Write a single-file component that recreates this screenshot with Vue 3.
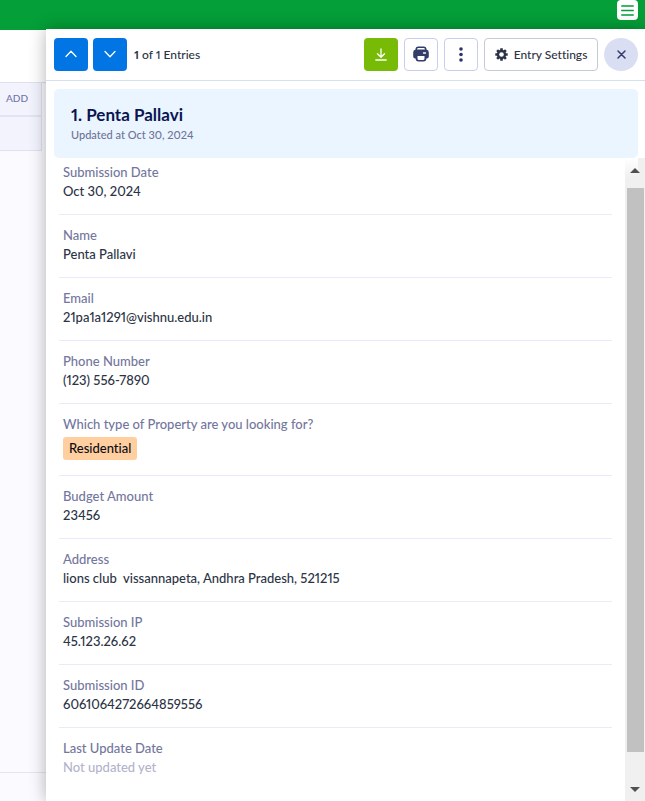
<script setup>
import { ref } from 'vue'

const entry = {
  title: '1. Penta Pallavi',
  updated: 'Updated at Oct 30, 2024',
}

const fields = ref([
  { label: 'Submission Date', value: 'Oct 30, 2024' },
  { label: 'Name', value: 'Penta Pallavi' },
  { label: 'Email', value: '21pa1a1291@vishnu.edu.in' },
  { label: 'Phone Number', value: '(123) 556-7890' },
  { label: 'Which type of Property are you looking for?', value: 'Residential', tag: true },
  { label: 'Budget Amount', value: '23456' },
  { label: 'Address', value: 'lions club\u00a0 vissannapeta, Andhra Pradesh, 521215' },
  { label: 'Submission IP', value: '45.123.26.62' },
  { label: 'Submission ID', value: '6061064272664859556' },
  { label: 'Last Update Date', value: 'Not updated yet', muted: true },
])
</script>

<template>
  <div class="app">
    <header class="topbar">
      <button class="menu" type="button" aria-label="Menu">
        <svg width="13" height="11" viewBox="0 0 13 11" fill="none" stroke="#049c38" stroke-width="1.3" stroke-linecap="round">
          <path d="M.7 1h11.6M.7 5.5h11.6M.7 10h11.6" />
        </svg>
      </button>
    </header>

    <main class="sheet">
      <div class="sheet-tools"></div>
      <div class="sheet-grid">
        <button class="add" type="button">ADD</button>
        <div class="cell"></div>
      </div>
      <div class="sheet-footer"></div>
    </main>

    <aside class="drawer">
      <div class="toolbar">
        <button class="btn nav" type="button" aria-label="Previous entry">
          <svg width="12" height="8" viewBox="0 0 12 8" fill="none" stroke="#fff" stroke-width="1.3" stroke-linecap="round" stroke-linejoin="round"><path d="M1 6.5 6 1.3l5 5.2" /></svg>
        </button>
        <button class="btn nav" type="button" aria-label="Next entry">
          <svg width="12" height="8" viewBox="0 0 12 8" fill="none" stroke="#fff" stroke-width="1.3" stroke-linecap="round" stroke-linejoin="round"><path d="m1 1.5 5 5.2 5-5.2" /></svg>
        </button>
        <p class="count"><b>1</b> of 1 Entries</p>

        <div class="actions">
          <button class="btn download" type="button" aria-label="Download">
            <svg width="12" height="13" viewBox="0 0 12 13" fill="none" stroke="#fff" stroke-width="1.3" stroke-linecap="round" stroke-linejoin="round"><path d="M6 1v8M2.5 5.8 6 9.2l3.5-3.4M.8 12h10.4" /></svg>
          </button>
          <button class="btn outline" type="button" aria-label="Print">
            <svg width="16" height="16" viewBox="0 0 16 16">
              <path fill="#343c6a" d="M2.5 3.6A3 3 0 0 1 5.4.5h5.2a3 3 0 0 1 2.9 3.1A2.8 2.8 0 0 1 15.8 6.4v4.2a2 2 0 0 1-2 2h-.4a3 3 0 0 1-3 3H5.6a3 3 0 0 1-3-3h-.4a2 2 0 0 1-2-2V6.4a2.8 2.8 0 0 1 2.3-2.8Z" />
              <path fill="#fff" d="M4 3.6c0-1 .6-1.7 1.5-1.7h5c.9 0 1.500.7 1.500 1.700ZM4.500 10h7v2.500a1.500 1.500 0 0 1-1.500 1.500H6a1.500 1.500 0 0 1-1.500-1.500Z" />
              <path stroke="#fff" stroke-width="1.3" stroke-linecap="round" d="M10.500 7h2" />
            </svg>
          </button>
          <button class="btn outline" type="button" aria-label="More actions">
            <svg width="4" height="15" viewBox="0 0 4 15" fill="#2c3567"><circle cx="2" cy="2" r="1.8" /><circle cx="2" cy="7.5" r="1.8" /><circle cx="2" cy="13" r="1.8" /></svg>
          </button>
          <button class="btn outline settings" type="button">
            <svg width="13" height="13" viewBox="0 0 13 13">
              <g stroke="#2c3345" stroke-width="2.6">
                <path d="M6.500.3v12.400M.3 6.500h12.400M2.100 2.100l8.800 8.800M10.900 2.100l-8.800 8.800" />
              </g>
              <circle cx="6.5" cy="6.5" r="4.7" fill="#2c3345" />
              <circle cx="6.5" cy="6.5" r="2.3" fill="#fff" />
            </svg>
            Entry Settings
          </button>
          <button class="btn close" type="button" aria-label="Close">
            <svg width="9" height="9" viewBox="0 0 9 9" stroke="#343c6a" stroke-width="1.5" stroke-linecap="round"><path d="m1 1 7 7M8 1 1 8" /></svg>
          </button>
        </div>
      </div>

      <section class="summary">
        <h1>{{ entry.title }}</h1>
        <p>{{ entry.updated }}</p>
      </section>

      <div class="content">
        <dl class="fields">
          <div v-for="field in fields" :key="field.label" class="field">
            <dt>{{ field.label }}</dt>
            <dd :class="{ muted: field.muted, tagged: field.tag }">
              <span v-if="field.tag" class="tag">{{ field.value }}</span>
              <template v-else>{{ field.value }}</template>
            </dd>
          </div>
        </dl>
        <div class="scrollbar" aria-hidden="true">
          <svg width="10" height="5" viewBox="0 0 10 5" fill="#505050"><path d="M0 5 5 0l5 5Z" /></svg>
          <div class="thumb"></div>
          <svg width="10" height="5" viewBox="0 0 10 5" fill="#505050"><path d="m0 0 5 5 5-5Z" /></svg>
        </div>
      </div>
    </aside>
  </div>
</template>

<style>
body {
  margin: 0;
}
</style>

<style scoped>
.app {
  position: relative;
  display: flex;
  flex-direction: column;
  height: 100vh;
  overflow: hidden;
  background: #fff;
  color: #2c3345;
  font-family: Lato, "Liberation Sans", sans-serif;
  font-size: 13px;
  font-weight: 500;
  font-variant-ligatures: none;
  font-variant-numeric: proportional-nums;
}

.app * {
  box-sizing: border-box;
}

button {
  padding: 0;
  border: 0;
  font: inherit;
  font-variant-ligatures: none;
  color: inherit;
  cursor: pointer;
}

p,
h1,
dl,
dd {
  margin: 0;
}

.topbar {
  flex: none;
  display: flex;
  justify-content: flex-end;
  align-items: flex-start;
  height: 30px;
  padding: 0 7px;
  background: #049f38;
}

.menu {
  display: grid;
  place-items: center;
  width: 21px;
  height: 20px;
  border-radius: 4px;
  background: #fff;
}

.sheet {
  flex: 1;
  display: flex;
  flex-direction: column;
}

.sheet-tools {
  height: 52px;
}

.sheet-grid {
  flex: 1;
  border-top: 1px solid #dfe1f2;
  background: #fafaff;
}

.add,
.cell {
  display: block;
  width: 42px;
  border-right: 1px solid #dfe1f2;
  background: #f3f3fe;
}

.add {
  height: 34px;
  padding: 0 0 2px 6px;
  border-bottom: 2px solid #e2e4f3;
  color: #6c73a8;
  font-size: 10px;
  text-align: left;
}

.cell {
  height: 34px;
  border-bottom: 1px solid #dfe1f2;
}

.sheet-footer {
  height: 29px;
  border-top: 1px solid #e3e5f5;
  background: #fafaff;
}

.drawer {
  position: absolute;
  inset: 29px 0 0 46px;
  display: flex;
  flex-direction: column;
  background: #fff;
  box-shadow: 0 0 16px rgba(0, 0, 0, 0.3);
}

.toolbar {
  flex: none;
  display: flex;
  align-items: center;
  gap: 5px;
  height: 52px;
  padding: 0 7px 1px 8px;
  border-bottom: 1px solid #d3e0ee;
}

.btn {
  display: flex;
  justify-content: center;
  align-items: center;
  width: 34px;
  height: 33px;
  border-radius: 4px;
}

.nav {
  background: #0075e3;
}

.count {
  margin-left: 2px;
  font-size: 12px;
}

.actions {
  display: flex;
  gap: 6px;
  margin-left: auto;
}

.download {
  background: #78bb07;
}

.outline {
  border: 1px solid #c8ceed;
  background: #fff;
}

.settings {
  gap: 6px;
  width: 114px;
  border-color: #c3cad8;
  font-size: 12px;
  white-space: nowrap;
}

.close {
  border-radius: 50%;
  background: #dadef3;
}

.summary {
  flex: none;
  margin: 8px 7px 0 8px;
  padding: 15px 17px 14px;
  border-radius: 5px;
  background: #eaf5ff;
}

.summary h1 {
  color: #0a1551;
  font-size: 17px;
  font-weight: 700;
  line-height: 22px;
}

.summary p {
  color: #6f7396;
  font-size: 11px;
  line-height: 18px;
}

.content {
  flex: 1;
  display: flex;
  min-height: 0;
}

.fields {
  flex: 1;
  overflow: hidden;
  padding: 0 13px;
}

.field {
  padding: 11px 4px 13px;
  border-bottom: 1px solid #eaeafa;
}

.field:first-child {
  padding-top: 5px;
}

.field:last-child {
  border-bottom: 0;
}

dt,
dd {
  line-height: 19px;
}

dt {
  color: #73769d;
}

.muted {
  color: #b3b3cb;
}

.tagged {
  padding: 3px 0 2px;
}

.tag {
  display: block;
  width: fit-content;
  padding: 2px 6px;
  border-radius: 3px;
  background: #ffcfa0;
  color: #0b0b12;
}

.scrollbar {
  flex: none;
  display: flex;
  flex-direction: column;
  align-items: center;
  gap: 15px;
  width: 20px;
  padding: 10px 2px 9px;
  background: linear-gradient(#fff, #f0f0f0) no-repeat 0 0 / 13px 20px, #f0f0f0;
}

.scrollbar svg {
  flex: none;
}

.thumb {
  flex: 1;
  width: 17px;
  margin-bottom: 20px;
  background: #c1c1c1;
}
</style>
